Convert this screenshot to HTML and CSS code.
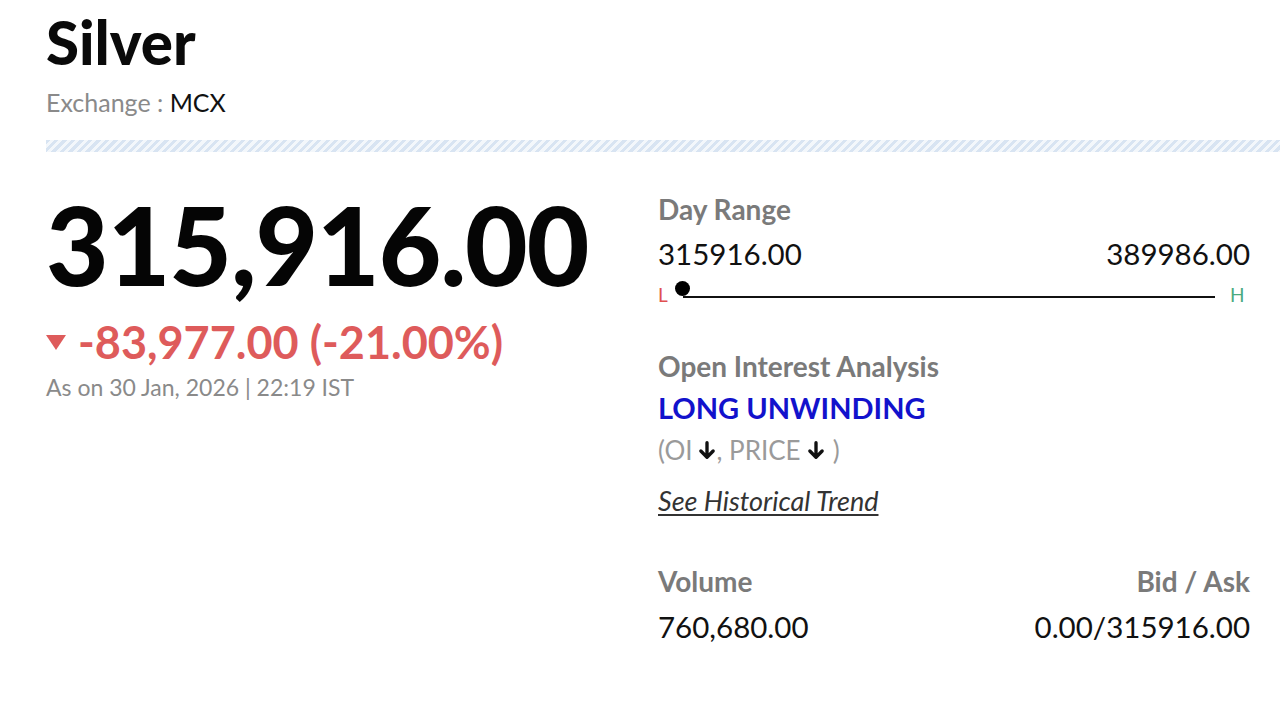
FILE: index.html
```html
<!DOCTYPE html>
<html lang="en">
<head>
<meta charset="utf-8">
<title>Silver - MCX</title>
<link rel="stylesheet" href="styles.css">
</head>
<body>
<div class="page">
  <header class="head">
    <h1 class="title">Silver</h1>
    <div class="exchange"><span class="ex-label">Exchange :</span> <span class="ex-value">MCX</span></div>
  </header>
  <div class="stripe"></div>
  <main class="main">
    <section class="left">
      <div class="price">315,916.00</div>
      <div class="change"><span class="tri"></span><span>-83,977.00 (-21.00%)</span></div>
      <div class="asof">As on 30 Jan, 2026 | 22:19 IST</div>
    </section>
    <section class="right">
      <div class="label">Day Range</div>
      <div class="range-values"><span>315916.00</span><span>389986.00</span></div>
      <div class="range-bar">
        <span class="rl">L</span>
        <div class="track"><span class="dot"></span></div>
        <span class="rh">H</span>
      </div>
      <div class="label oi-label">Open Interest Analysis</div>
      <div class="oi-value">LONG UNWINDING</div>
      <div class="oi-sub">(OI<svg class="arr" viewBox="0 0 16 17" width="18" height="19"><path d="M8 1.5v13M2.5 9l5.5 5.5 5.5-5.5" fill="none" stroke="#111" stroke-width="3" stroke-linecap="round" stroke-linejoin="round"/></svg>, PRICE<svg class="arr arr2" viewBox="0 0 16 17" width="18" height="19"><path d="M8 1.5v13M2.5 9l5.5 5.5 5.5-5.5" fill="none" stroke="#111" stroke-width="3" stroke-linecap="round" stroke-linejoin="round"/></svg>)</div>
      <a class="trend" href="#">See Historical Trend</a>
      <div class="stats">
        <div class="stat">
          <div class="label">Volume</div>
          <div class="val">760,680.00</div>
        </div>
        <div class="stat stat-right">
          <div class="label">Bid / Ask</div>
          <div class="val">0.00/315916.00</div>
        </div>
      </div>
    </section>
  </main>
</div>
</body>
</html>
```
FILE: styles.css
```css
* { box-sizing: border-box; }
html, body { margin: 0; padding: 0; background: #fff; }
body {
  font-family: "Lato", "Liberation Sans", sans-serif;
  color: #111;
  line-height: 1.2;
}
.page { padding-left: 46px; }
.title {
  margin: 6px 0 0;
  font-size: 60px;
  font-weight: 900;
  line-height: 1.2;
  color: #0a0a0a;
}
.exchange {
  margin-top: 9px;
  font-size: 25px;
}
.ex-label { color: #8a8a8a; }
.ex-value { color: #111; }
.stripe {
  margin-top: 23px;
  height: 12px;
  background: repeating-linear-gradient(135deg, #d8e4f2 0 3px, #f3f7fb 3px 6px);
}
.main {
  display: flex;
  margin-top: 28px;
}
.left { width: 612px; flex: none; }
.price {
  font-size: 108px;
  font-weight: 900;
  letter-spacing: -1px;
  color: #050505;
}
.change {
  display: flex;
  align-items: center;
  gap: 12px;
  margin-top: 5px;
  font-size: 45px;
  font-weight: 700;
  color: #de5b5b;
}
.tri {
  width: 0; height: 0;
  border-left: 10px solid transparent;
  border-right: 10px solid transparent;
  border-top: 15px solid #de5b5b;
  margin-top: 2px;
}
.asof {
  margin-top: 5px;
  font-size: 23px;
  color: #8a8a8a;
}
.right {
  flex: 1;
  padding-right: 30px;
  padding-top: 13px;
}
.label {
  font-size: 28px;
  font-weight: 700;
  color: #7a7a7a;
}
.range-values {
  display: flex;
  justify-content: space-between;
  margin-top: 9px;
  font-size: 29.5px;
  color: #111;
}
.range-bar {
  display: flex;
  align-items: flex-end;
  height: 36px;
}
.rl {
  width: 25px;
  font-size: 19px;
  color: #e05050;
}
.rh {
  width: 35px;
  padding-left: 15px;
  font-size: 19px;
  color: #4aaa80;
}
.track {
  position: relative;
  flex: 1;
  height: 2px;
  margin-bottom: 9px;
  background: #111;
}
.dot {
  position: absolute;
  left: -8px;
  top: -15px;
  width: 15px;
  height: 15px;
  border-radius: 50%;
  background: #000;
}
.oi-label { margin-top: 43px; }
.oi-value {
  margin-top: 7px;
  font-size: 29px;
  font-weight: 700;
  color: #1212cc;
}
.oi-sub {
  margin-top: 10px;
  font-size: 26px;
  color: #9a9a9a;
  display: flex;
  align-items: center;
}
.arr { margin: 0 1px 0 5px; }
.arr2 { margin: 0 8px 0 6px; }
.trend {
  display: block;
  width: max-content;
  margin-top: 18px;
  font-size: 27px;
  font-style: italic;
  color: #333;
  text-decoration: underline;
  text-underline-offset: 3px;
}
.stats {
  display: flex;
  justify-content: space-between;
  margin-top: 48px;
}
.stat-right { text-align: right; }
.stat .val {
  margin-top: 10px;
  font-size: 29.5px;
  color: #111;
}
```
